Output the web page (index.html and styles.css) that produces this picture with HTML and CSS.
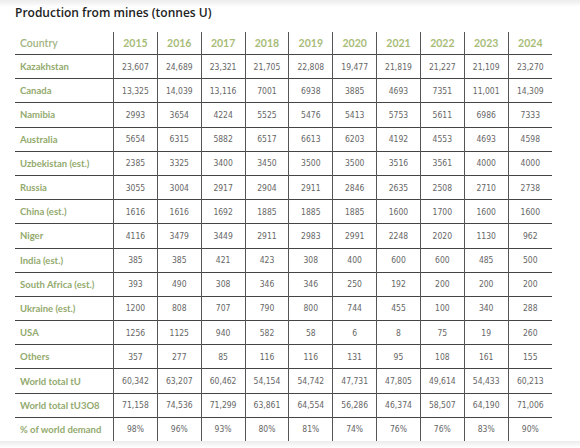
FILE: index.html
```html
<!DOCTYPE html>
<html lang="en">
<head>
    <meta charset="UTF-8">
    <meta name="viewport" content="width=device-width, initial-scale=1.0">
    <title>Production from mines</title>
    <link rel="stylesheet" href="styles.css">
</head>
<body>
    <div class="page">
        <h2>Production from mines (tonnes U)</h2>
        <table class="mines">
            <thead>
                <tr>
                    <th class="country">Country</th>
                    <th>2015</th><th>2016</th><th>2017</th><th>2018</th><th>2019</th>
                    <th>2020</th><th>2021</th><th>2022</th><th>2023</th><th>2024</th>
                </tr>
            </thead>
            <tbody>
                <tr><th>Kazakhstan</th><td>23,607</td><td>24,689</td><td>23,321</td><td>21,705</td><td>22,808</td><td>19,477</td><td>21,819</td><td>21,227</td><td>21,109</td><td>23,270</td></tr>
                <tr><th>Canada</th><td>13,325</td><td>14,039</td><td>13,116</td><td>7001</td><td>6938</td><td>3885</td><td>4693</td><td>7351</td><td>11,001</td><td>14,309</td></tr>
                <tr><th>Namibia</th><td>2993</td><td>3654</td><td>4224</td><td>5525</td><td>5476</td><td>5413</td><td>5753</td><td>5611</td><td>6986</td><td>7333</td></tr>
                <tr><th>Australia</th><td>5654</td><td>6315</td><td>5882</td><td>6517</td><td>6613</td><td>6203</td><td>4192</td><td>4553</td><td>4693</td><td>4598</td></tr>
                <tr><th>Uzbekistan (est.)</th><td>2385</td><td>3325</td><td>3400</td><td>3450</td><td>3500</td><td>3500</td><td>3516</td><td>3561</td><td>4000</td><td>4000</td></tr>
                <tr><th>Russia</th><td>3055</td><td>3004</td><td>2917</td><td>2904</td><td>2911</td><td>2846</td><td>2635</td><td>2508</td><td>2710</td><td>2738</td></tr>
                <tr><th>China (est.)</th><td>1616</td><td>1616</td><td>1692</td><td>1885</td><td>1885</td><td>1885</td><td>1600</td><td>1700</td><td>1600</td><td>1600</td></tr>
                <tr><th>Niger</th><td>4116</td><td>3479</td><td>3449</td><td>2911</td><td>2983</td><td>2991</td><td>2248</td><td>2020</td><td>1130</td><td>962</td></tr>
                <tr><th>India (est.)</th><td>385</td><td>385</td><td>421</td><td>423</td><td>308</td><td>400</td><td>600</td><td>600</td><td>485</td><td>500</td></tr>
                <tr><th>South Africa (est.)</th><td>393</td><td>490</td><td>308</td><td>346</td><td>346</td><td>250</td><td>192</td><td>200</td><td>200</td><td>200</td></tr>
                <tr><th>Ukraine (est.)</th><td>1200</td><td>808</td><td>707</td><td>790</td><td>800</td><td>744</td><td>455</td><td>100</td><td>340</td><td>288</td></tr>
                <tr><th>USA</th><td>1256</td><td>1125</td><td>940</td><td>582</td><td>58</td><td>6</td><td>8</td><td>75</td><td>19</td><td>260</td></tr>
                <tr><th>Others</th><td>357</td><td>277</td><td>85</td><td>116</td><td>116</td><td>131</td><td>95</td><td>108</td><td>161</td><td>155</td></tr>
                <tr><th>World total tU</th><td>60,342</td><td>63,207</td><td>60,462</td><td>54,154</td><td>54,742</td><td>47,731</td><td>47,805</td><td>49,614</td><td>54,433</td><td>60,213</td></tr>
                <tr><th>World total tU3O8</th><td>71,158</td><td>74,536</td><td>71,299</td><td>63,861</td><td>64,554</td><td>56,286</td><td>46,374</td><td>58,507</td><td>64,190</td><td>71,006</td></tr>
                <tr><th>% of world demand</th><td>98%</td><td>96%</td><td>93%</td><td>80%</td><td>81%</td><td>74%</td><td>76%</td><td>76%</td><td>83%</td><td>90%</td></tr>
            </tbody>
        </table>
    </div>
</body>
</html>
```

FILE: styles.css
```css
body {
    margin: 0;
    padding: 0;
    background: linear-gradient(to bottom, #ececec 0, #ffffff 7px, #ffffff 100%);
    font-family: 'Lato', sans-serif;
}

.page {
    padding: 5px 28px 0 15px;
}

h2 {
    margin: 0 0 11px;
    font-family: 'Open Sans', sans-serif;
    font-size: 12px;
    font-weight: 600;
    color: #222;
    line-height: 16px;
}

.mines {
    width: 537px;
    border-collapse: collapse;
    table-layout: fixed;
}

.mines th,
.mines td {
    height: 23.2px;
    padding: 0;
    border-left: 1px solid #555;
    border-top: 1px solid #444;
    text-align: center;
}

.mines thead th {
    height: 22px;
    border-top: none;
    font-size: 10.5px;
    font-weight: 700;
    color: #a8bc78;
}

.mines th:first-child {
    border-left: none;
}

.mines .country {
    width: 93px;
    text-align: left;
    padding-left: 5px;
    font-weight: 600;
    color: #a2b382;
}

.mines tbody th {
    text-align: left;
    padding-left: 5px;
    font-size: 9.5px;
    font-weight: 700;
    color: #93aa6e;
    white-space: nowrap;
}

.mines td {
    font-family: 'DejaVu Sans Condensed', 'DejaVu Sans', sans-serif;
    font-stretch: condensed;
    font-size: 8.5px;
    color: #666;
}
```
